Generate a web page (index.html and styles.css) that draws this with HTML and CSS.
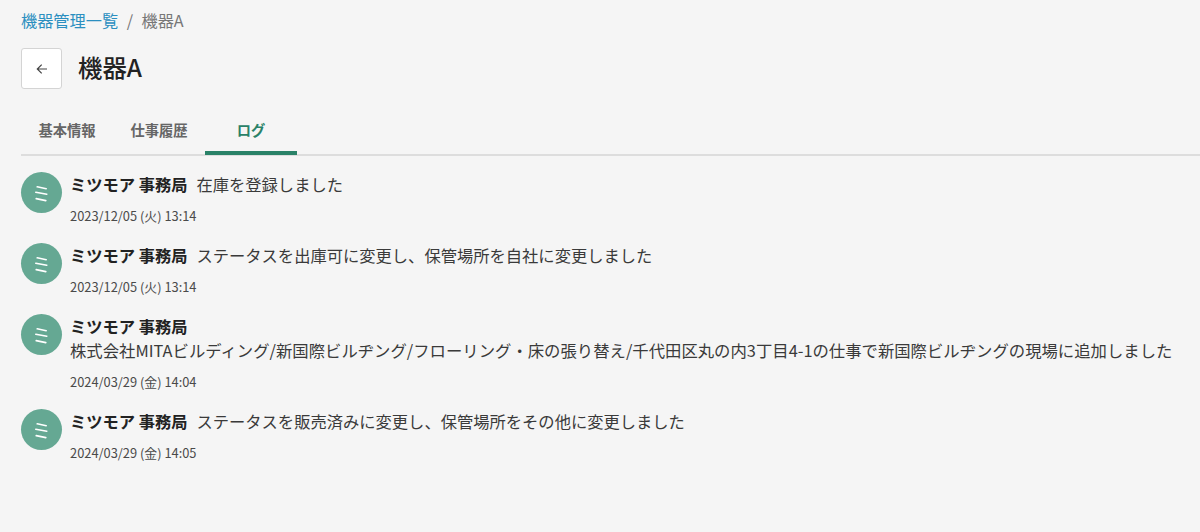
FILE: index.html
```html
<!DOCTYPE html>
<html lang="ja">
<head>
    <meta charset="UTF-8">
    <title>機器A</title>
    <link rel="stylesheet" href="styles.css">
</head>
<body>

<div class="breadcrumb">
    <a href="#" class="crumb-link">機器管理一覧</a>
    <span class="crumb-sep">/</span>
    <span class="crumb-now">機器A</span>
</div>

<div class="title-row">
    <button class="back-btn" aria-label="戻る">
        <svg width="12" height="12" viewBox="0 0 12 12" fill="none" stroke="#444" stroke-width="1.2">
            <path d="M11 6H1.5M5.7 1.6L1.3 6l4.4 4.4"/>
        </svg>
    </button>
    <h1>機器A</h1>
</div>

<div class="tabs">
    <div class="tab">基本情報</div>
    <div class="tab">仕事履歴</div>
    <div class="tab active">ログ</div>
</div>

<div class="log-list">
    <div class="log-item">
        <div class="avatar"><svg width="16" height="18" viewBox="0 0 16 18" stroke="#fff" stroke-width="1.6" stroke-linecap="round"><path d="M3.2 2.8l9 1.9M1.8 8.2l11 2M2.2 14.6l9.6 2"/></svg></div>
        <div class="log-body">
            <div class="log-text"><b>ミツモア 事務局</b><span>在庫を登録しました</span></div>
            <div class="log-date">2023/12/05 (火) 13:14</div>
        </div>
    </div>
    <div class="log-item">
        <div class="avatar"><svg width="16" height="18" viewBox="0 0 16 18" stroke="#fff" stroke-width="1.6" stroke-linecap="round"><path d="M3.2 2.8l9 1.9M1.8 8.2l11 2M2.2 14.6l9.6 2"/></svg></div>
        <div class="log-body">
            <div class="log-text"><b>ミツモア 事務局</b><span>ステータスを出庫可に変更し、保管場所を自社に変更しました</span></div>
            <div class="log-date">2023/12/05 (火) 13:14</div>
        </div>
    </div>
    <div class="log-item">
        <div class="avatar"><svg width="16" height="18" viewBox="0 0 16 18" stroke="#fff" stroke-width="1.6" stroke-linecap="round"><path d="M3.2 2.8l9 1.9M1.8 8.2l11 2M2.2 14.6l9.6 2"/></svg></div>
        <div class="log-body">
            <div class="log-text"><b>ミツモア 事務局</b></div>
            <div class="log-text">株式会社MITAビルディング/新国際ビルヂング/フローリング・床の張り替え/千代田区丸の内3丁目4-1の仕事で新国際ビルヂングの現場に追加しました</div>
            <div class="log-date">2024/03/29 (金) 14:04</div>
        </div>
    </div>
    <div class="log-item">
        <div class="avatar"><svg width="16" height="18" viewBox="0 0 16 18" stroke="#fff" stroke-width="1.6" stroke-linecap="round"><path d="M3.2 2.8l9 1.9M1.8 8.2l11 2M2.2 14.6l9.6 2"/></svg></div>
        <div class="log-body">
            <div class="log-text"><b>ミツモア 事務局</b><span>ステータスを販売済みに変更し、保管場所をその他に変更しました</span></div>
            <div class="log-date">2024/03/29 (金) 14:05</div>
        </div>
    </div>
</div>

</body>
</html>
```

FILE: styles.css
```css
html, body {
    margin: 0;
    padding: 0;
}
body {
    height: 532px;
    overflow: hidden;
    padding-left: 21px;
    background-color: #f5f5f5;
    color: #3a3a3a;
    font-family: "Noto Sans CJK JP", "Noto Sans", sans-serif;
    font-size: 16px;
}
.breadcrumb {
    display: flex;
    align-items: center;
    gap: 8.5px;
    height: 20px;
    padding-top: 10px;
    font-size: 16.2px;
    line-height: 20px;
}
.crumb-link {
    color: #2b8fc0;
    text-decoration: none;
}
.crumb-sep,
.crumb-now {
    color: #777;
}
.title-row {
    display: flex;
    align-items: center;
    gap: 16px;
    margin-top: 18px;
}
.back-btn {
    display: flex;
    justify-content: center;
    align-items: center;
    width: 41px;
    height: 41px;
    padding: 0;
    background-color: #fff;
    border: 1px solid #d4d4d4;
    border-radius: 3px;
}
h1 {
    margin: 0;
    padding-bottom: 4px;
    color: #222;
    font-size: 24.4px;
    font-weight: 500;
    line-height: 37px;
}
.tabs {
    display: flex;
    height: 67px;
    box-sizing: border-box;
    border-bottom: 2px solid #ddd;
}
.tab {
    width: 92px;
    height: 66px;
    box-sizing: border-box;
    padding-top: 31px;
    color: #666;
    font-size: 14.3px;
    font-weight: 700;
    line-height: 20px;
    text-align: center;
}
.tab.active {
    color: #2a8268;
    border-bottom: 4px solid #2a8268;
}
.log-list {
    display: flex;
    flex-direction: column;
    gap: 17px;
    padding-top: 16px;
}
.log-item {
    display: flex;
    gap: 8px;
}
.avatar {
    display: flex;
    flex-shrink: 0;
    justify-content: center;
    align-items: center;
    width: 41px;
    height: 41px;
    background-color: #65a893;
    border-radius: 50%;
}
.log-text {
    font-size: 16.36px;
    line-height: 24px;
    white-space: nowrap;
}
.log-text b {
    margin-right: 9px;
    color: #222;
    font-size: 16.25px;
    font-weight: 700;
}
.log-text span {
    font-size: 16.3px;
}
.log-date {
    margin-top: 10px;
    color: #4a4a4a;
    font-size: 12.85px;
    line-height: 20px;
}
```
